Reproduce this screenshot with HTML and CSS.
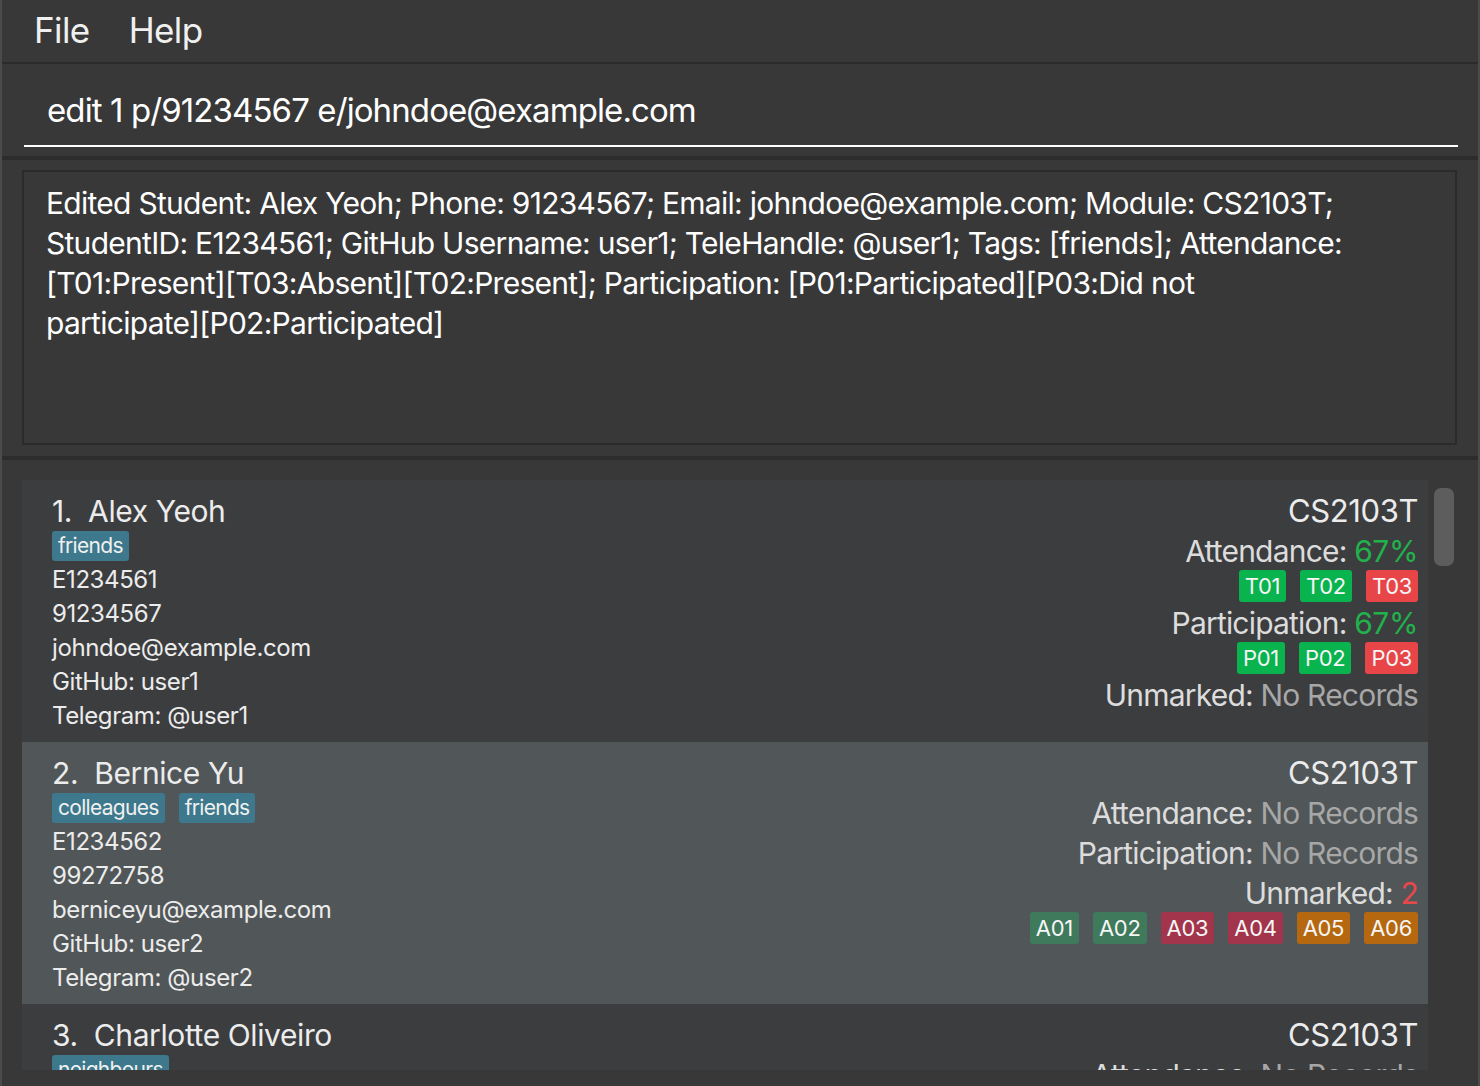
FILE: index.html
```html
<!DOCTYPE html>
<html>
<head>
<meta charset="utf-8">
<link rel="stylesheet" href="styles.css">
</head>
<body>
<div class="app">
  <div class="menubar">
    <span class="menu-item">File</span>
    <span class="menu-item">Help</span>
  </div>
  <div class="command-pane">
    <div class="command-input">edit 1 p/91234567 e/johndoe@example.com</div>
  </div>
  <div class="result-pane">
    <div class="result-box">Edited Student: Alex Yeoh; Phone: 91234567; Email: johndoe@example.com; Module: CS2103T;<br>StudentID: E1234561; GitHub Username: user1; TeleHandle: @user1; Tags: [friends]; Attendance:<br>[T01:Present][T03:Absent][T02:Present]; Participation: [P01:Participated][P03:Did not<br>participate][P02:Participated]</div>
  </div>
  <div class="list-pane">
    <div class="list-viewport">
      <div class="card">
        <div class="card-left">
          <div class="name">1.&nbsp; Alex Yeoh</div>
          <div class="tags"><span class="tag">friends</span></div>
          <div class="detail">E1234561</div>
          <div class="detail">91234567</div>
          <div class="detail">johndoe@example.com</div>
          <div class="detail">GitHub: user1</div>
          <div class="detail">Telegram: @user1</div>
        </div>
        <div class="card-right">
          <div class="module">CS2103T</div>
          <div class="stat">Attendance: <span class="good">67%</span></div>
          <div class="badges"><span class="badge b-green">T01</span><span class="badge b-green">T02</span><span class="badge b-red">T03</span></div>
          <div class="stat">Participation: <span class="good">67%</span></div>
          <div class="badges"><span class="badge b-green">P01</span><span class="badge b-green">P02</span><span class="badge b-red">P03</span></div>
          <div class="stat">Unmarked: <span class="none">No Records</span></div>
        </div>
      </div>
      <div class="card card-alt">
        <div class="card-left">
          <div class="name">2.&nbsp; Bernice Yu</div>
          <div class="tags"><span class="tag">colleagues</span><span class="tag">friends</span></div>
          <div class="detail">E1234562</div>
          <div class="detail">99272758</div>
          <div class="detail">berniceyu@example.com</div>
          <div class="detail">GitHub: user2</div>
          <div class="detail">Telegram: @user2</div>
        </div>
        <div class="card-right">
          <div class="module">CS2103T</div>
          <div class="stat">Attendance: <span class="none">No Records</span></div>
          <div class="stat">Participation: <span class="none">No Records</span></div>
          <div class="stat">Unmarked: <span class="bad">2</span></div>
          <div class="badges"><span class="badge b-dgreen">A01</span><span class="badge b-dgreen">A02</span><span class="badge b-crimson">A03</span><span class="badge b-crimson">A04</span><span class="badge b-orange">A05</span><span class="badge b-orange">A06</span></div>
        </div>
      </div>
      <div class="card">
        <div class="card-left">
          <div class="name">3.&nbsp; Charlotte Oliveiro</div>
          <div class="tags"><span class="tag">neighbours</span></div>
          <div class="detail">E1234563</div>
        </div>
        <div class="card-right">
          <div class="module">CS2103T</div>
          <div class="stat">Attendance: <span class="none">No Records</span></div>
        </div>
      </div>
    </div>
    <div class="scroll-track"><div class="scroll-thumb"></div></div>
  </div>
</div>
</body>
</html>
```
FILE: styles.css
```css
html, body {
  margin: 0;
  padding: 0;
  background: #383838;
}
body {
  font-family: Inter, "Open Sans", "Liberation Sans", sans-serif;
  color: #ffffff;
}
.app {
  width: 1480px;
  height: 1086px;
  box-sizing: border-box;
  border-left: 2px solid #4b4b4b;
  border-right: 2px solid #4b4b4b;
  background: #383838;
  display: flex;
  flex-direction: column;
  overflow: hidden;
}
.menubar {
  height: 62px;
  display: flex;
  align-items: center;
  gap: 39px;
  padding-left: 32px;
  border-bottom: 2px solid #2b2b2b;
  flex: none;
}
.menu-item {
  font-size: 35px;
  color: #f0f0f0;
  letter-spacing: -0.6px;
  margin-top: -2px;
}
.command-pane {
  height: 92px;
  flex: none;
  padding: 0 20px 0 22px;
  display: flex;
  align-items: flex-end;
  border-bottom: 4px solid #2d2d2d;
}
.command-input {
  flex: 1;
  height: 72px;
  margin-bottom: 9px;
  border-bottom: 2px solid #ffffff;
  box-sizing: border-box;
  padding-left: 23px;
  font-size: 33px;
  line-height: 70px;
  letter-spacing: -0.9px;
  color: #ffffff;
}
.result-pane {
  flex: none;
  height: 300px;
  box-sizing: border-box;
  padding: 10px 21px 11px 20px;
  border-bottom: 4px solid #2d2d2d;
}
.result-box {
  height: 100%;
  box-sizing: border-box;
  border: 2px solid #2b2b2b;
  padding: 11px 10px 0 22px;
  font-size: 30px;
  line-height: 40px;
  letter-spacing: -0.72px;
  white-space: nowrap;
  color: #ffffff;
}
.list-pane {
  flex: 1;
  display: flex;
  padding: 20px 0 16px 20px;
  min-height: 0;
}
.list-viewport {
  width: 1406px;
  height: 590px;
  overflow: hidden;
  flex: none;
}
.scroll-track {
  flex: 1;
  padding: 8px 22px 0 6px;
}
.scroll-thumb {
  width: 20px;
  height: 78px;
  border-radius: 7px;
  background: #5d5d5d;
}
.card {
  display: flex;
  justify-content: space-between;
  background: #3c3d3f;
  padding: 13px 10px 9px 30px;
  color: #ececec;
}
.card-alt {
  background: #515658;
}
.card-left {
  display: flex;
  flex-direction: column;
}
.name {
  font-size: 30px;
  line-height: 36px;
  letter-spacing: -0.4px;
  color: #ececec;
}
.tags {
  display: flex;
  gap: 14px;
  margin: 2px 0 2px;
  height: 30px;
}
.tag {
  background: #3d788c;
  border-radius: 3px;
  padding: 0 6px;
  font-size: 21px;
  line-height: 30px;
  height: 30px;
  color: #f0f0f0;
  letter-spacing: -0.7px;
}
.detail {
  font-size: 24px;
  line-height: 34px;
  letter-spacing: -0.4px;
  color: #ececec;
}
.card-right {
  display: flex;
  flex-direction: column;
  align-items: flex-end;
  margin-top: -2px;
}
.module {
  font-size: 31px;
  line-height: 40px;
  letter-spacing: -0.4px;
  color: #ececec;
}
.stat {
  font-size: 30px;
  line-height: 40px;
  letter-spacing: -0.8px;
  color: #dcdcdc;
}
.good { color: #22b24c; letter-spacing: -0.4px; }
.bad { color: #e8484b; }
.none { color: #a7a7a7; }
.badges {
  display: flex;
  gap: 14px;
  height: 32px;
  margin: -1px 0 1px;
}
.badge {
  font-size: 22px;
  line-height: 32px;
  height: 32px;
  padding: 0 6px;
  border-radius: 3px;
  color: #f6f6f6;
  letter-spacing: -0.3px;
}
.b-green { background: #09b34e; }
.b-red { background: #e84549; }
.b-dgreen { background: #3e7a5b; }
.b-crimson { background: #a2344b; }
.b-orange { background: #b5680f; }
```
